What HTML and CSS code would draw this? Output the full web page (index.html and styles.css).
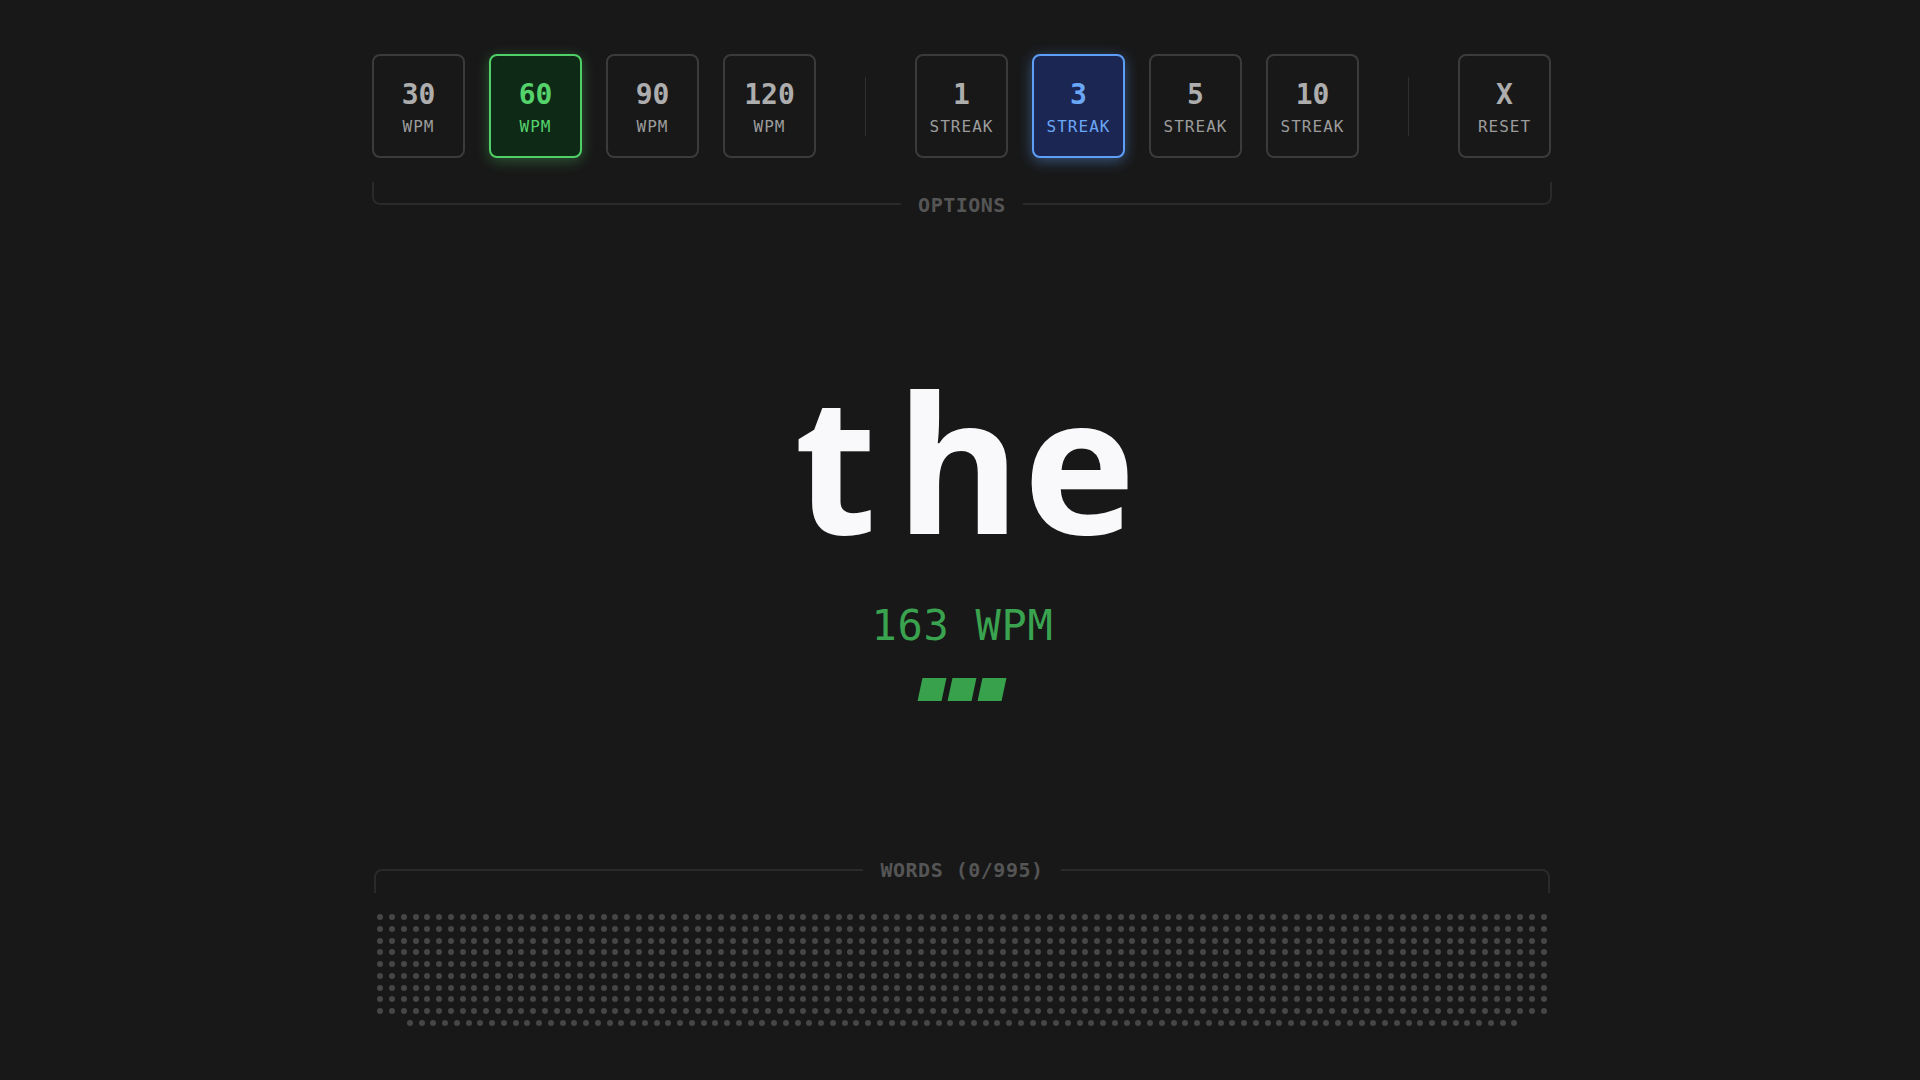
FILE: index.html
```html
<!DOCTYPE html>
<html lang="en">
<head>
<meta charset="utf-8">
<title>Speed Reader</title>
<link rel="stylesheet" href="styles.css">
</head>
<body>
<div class="app">
  <div class="controls">
    <div class="btn"><span class="num">30</span><span class="lbl">WPM</span></div>
    <div class="btn green"><span class="num">60</span><span class="lbl">WPM</span></div>
    <div class="btn"><span class="num">90</span><span class="lbl">WPM</span></div>
    <div class="btn"><span class="num">120</span><span class="lbl">WPM</span></div>
    <div class="sep"></div>
    <div class="btn"><span class="num">1</span><span class="lbl">STREAK</span></div>
    <div class="btn blue"><span class="num">3</span><span class="lbl">STREAK</span></div>
    <div class="btn"><span class="num">5</span><span class="lbl">STREAK</span></div>
    <div class="btn"><span class="num">10</span><span class="lbl">STREAK</span></div>
    <div class="sep"></div>
    <div class="btn"><span class="num">X</span><span class="lbl">RESET</span></div>
  </div>
  <div class="bracket bracket-bottom">
    <div class="piece left"></div>
    <div class="legend">OPTIONS</div>
    <div class="piece right"></div>
  </div>

  <div class="stage">
    <div class="word"><span>t</span><span>h</span><span>e</span></div>
    <div class="wpm">163 WPM</div>
    <div class="streak"><span></span><span></span><span></span></div>
  </div>

  <div class="words">
    <div class="bracket bracket-top">
      <div class="piece left"></div>
      <div class="legend">WORDS (0/995)</div>
      <div class="piece right"></div>
    </div>
    <div class="dots" id="dots"></div>
  </div>
</div>
<script src="script.js"></script>
</body>
</html>
```

FILE: styles.css
```css
html, body {
  margin: 0;
  background: #181818;
}
body {
  font-family: "DejaVu Sans Mono", "Liberation Mono", monospace;
  color: #aaa;
}
.app {
  width: 1180px;
  margin-left: calc(50% - 588px);
  padding-top: 54px;
}
.controls {
  display: flex;
  align-items: center;
  gap: 24px;
}
.btn {
  width: 93px;
  height: 104px;
  box-sizing: border-box;
  border: 2px solid #3b3b3b;
  border-radius: 8px;
  background: #181818;
  display: flex;
  flex-direction: column;
  align-items: center;
  justify-content: center;
  color: #adadad;
}
.num {
  font-size: 28px;
  font-weight: 700;
  line-height: 32px;
  margin-top: 4px;
}
.lbl {
  font-size: 16px;
  line-height: 20px;
  margin-top: 6px;
  letter-spacing: 1px;
  color: #9c9c9c;
}
.btn.green {
  border-color: #4fcf66;
  background: #0f2917;
  box-shadow: 0 3px 14px rgba(79, 207, 102, 0.35);
}
.btn.green .num, .btn.green .lbl { color: #55d36b; }
.btn.blue {
  border-color: #5d9ef6;
  background: #1b2653;
  box-shadow: 0 3px 14px rgba(93, 158, 246, 0.45);
}
.btn.blue .num, .btn.blue .lbl { color: #6ba7f7; }
.sep {
  width: 1px;
  height: 59px;
  background: #2f2f2f;
  margin: 0 25px;
}

.bracket {
  display: flex;
  align-items: flex-start;
}
.bracket .piece {
  flex: 1;
  box-sizing: border-box;
  height: 23px;
  border-color: #2a2a2a;
  border-style: solid;
  border-width: 0;
}
.bracket .legend {
  font-size: 20px;
  font-weight: 700;
  line-height: 24px;
  letter-spacing: 0.5px;
  color: #555;
  padding: 0 17px;
}
.bracket-bottom {
  margin-top: 24px;
}
.bracket-bottom .legend { margin-top: 11px; }
.bracket-bottom .piece { border-bottom-width: 2px; }
.bracket-bottom .left { border-left-width: 2px; border-bottom-left-radius: 8px; }
.bracket-bottom .right { border-right-width: 2px; border-bottom-right-radius: 8px; }

.bracket-top .piece { border-top-width: 2px; margin-top: 11px; height: 24px; }
.bracket-top .left { border-left-width: 2px; border-top-left-radius: 8px; }
.bracket-top .right { border-right-width: 2px; border-top-right-radius: 8px; }

.stage {
  display: flex;
  flex-direction: column;
  align-items: center;
}
.word {
  display: flex;
  margin-top: 148px;
  padding-right: 9px;
  font-family: "Noto Sans", "Open Sans", sans-serif;
  font-size: 190px;
  line-height: 192px;
  font-weight: 700;
  color: #f9f9fb;
}
.word span {
  width: 122px;
  text-align: center;
}
.wpm {
  margin-top: 48px;
  padding-left: 1px;
  font-size: 42px;
  line-height: 42px;
  letter-spacing: 0.7px;
  color: #3aa34f;
}
.streak {
  margin-top: 31px;
  display: flex;
  gap: 6px;
}
.streak span {
  width: 24px;
  height: 23px;
  background: #37a24b;
  transform: skewX(-12deg);
}

.words {
  margin: 157px 2px 0;
}
.dots {
  margin-top: 21px;
  display: flex;
  flex-wrap: wrap;
  justify-content: center;
  gap: 5.76px;
}
.dots i {
  display: block;
  width: 6px;
  height: 6px;
  border-radius: 50%;
  background: #464646;
}
```

FILE: script.js
```js
var dots = document.getElementById('dots');
for (var i = 0; i < 995; i++) {
  dots.appendChild(document.createElement('i'));
}
```
